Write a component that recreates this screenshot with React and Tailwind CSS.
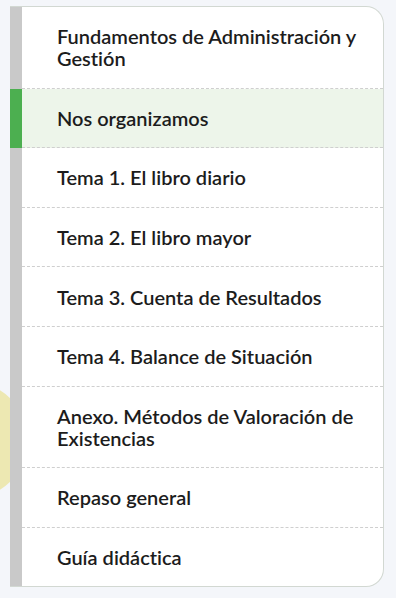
import React from "react";

const items = [
  { t: "Fundamentos de Administración y Gestión" },
  { t: "Nos organizamos", active: true },
  { t: "Tema 1. El libro diario" },
  { t: "Tema 2. El libro mayor" },
  { t: "Tema 3. Cuenta de Resultados" },
  { t: "Tema 4. Balance de Situación" },
  { t: "Anexo. Métodos de Valoración de Existencias" },
  { t: "Repaso general" },
  { t: "Guía didáctica" },
];

export default function App() {
  return (
    <div
      className="relative w-[396px] h-[598px] bg-[#f4f6fa] overflow-hidden"
      style={{ fontFamily: "Lato, 'Noto Sans', sans-serif" }}
    >
      <div className="absolute left-[-88px] top-[382px] w-[116px] h-[116px] rounded-full bg-[#ede8b2]" />
      <div className="relative pt-[6px] pl-[10px] pr-[12px]">
        <div className="flex flex-col bg-white border-y border-r border-[#d2d8d2] rounded-r-[18px] overflow-hidden">
          {items.map((it, i) => (
            <div key={i} className="flex">
              <div className={`w-[12px] shrink-0 ${it.active ? "bg-[#4caf50]" : "bg-[#c9c9c9]"}`} />
              <div
                className={`flex-1 pl-[35px] pr-3 py-[18.3px] text-[20px] leading-[22px] font-semibold text-[#1c1c1c] [font-variant-ligatures:none] ${
                  i < items.length - 1 ? "border-b border-dashed border-[#cfcfcf]" : ""
                } ${it.active ? "bg-[#edf5ea]" : ""}`}
              >
                {it.t}
              </div>
            </div>
          ))}
        </div>
      </div>
    </div>
  );
}
